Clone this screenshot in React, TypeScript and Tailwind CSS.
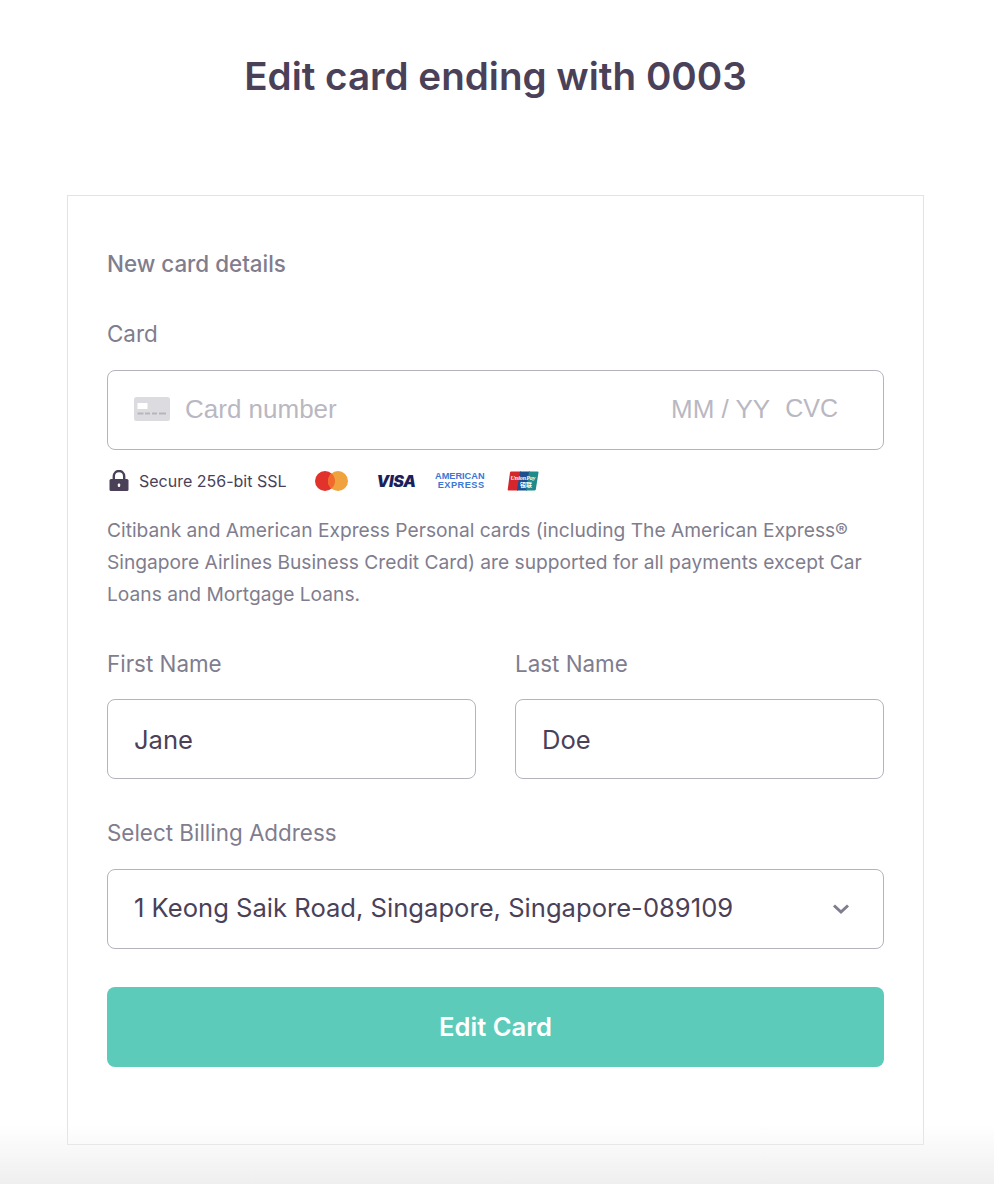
import React from "react";

function Field({ label, value }: { label: string; value: string }) {
  return (
    <div className="flex flex-col">
      <label className="text-[22.4px] leading-[28px] text-[#7f7d8e] mb-[21px]">{label}</label>
      <div className="h-[80px] rounded-[8px] border border-[#b5b4be] flex items-center pt-[2px] px-[26px] text-[25.6px] text-[#4a4159]">
        {value}
      </div>
    </div>
  );
}

export default function App() {
  return (
    <div className="relative h-[1184px] w-full overflow-hidden bg-white font-['Inter',sans-serif]">
      <h1 className="pt-[50px] pr-[3px] text-center text-[38.6px] leading-[52px] font-semibold text-[#4a4159]">
        Edit card ending with 0003
      </h1>
      <div className="ml-[67px] mr-[70px] mt-[93px] h-[950px] border border-[#e3e3e3] px-[39px] pt-[54px]">
        <div className="text-[22.4px] leading-[28px] font-medium text-[#7f7d8e]">New card details</div>
        <div className="mt-[42px] text-[22.4px] leading-[28px] text-[#7f7d8e]">Card</div>
        <div className="mt-[22px] h-[80px] rounded-[8px] border border-[#b5b4be] flex items-center pb-[2px] pl-[26px] pr-[45px] font-['Liberation_Sans',sans-serif] text-[26px] text-[#b9b8c2]">
          <svg width="36" height="24" viewBox="0 0 36 24" className="mr-[15px]">
            <rect width="36" height="24" rx="2.5" fill="#dcdce0" />
            <rect x="3.5" y="6" width="10" height="6" fill="#ffffff" />
            <rect x="3.5" y="15.5" width="6" height="2" fill="#b5b5bc" />
            <rect x="11" y="15.5" width="5" height="2" fill="#b5b5bc" />
            <rect x="18" y="15.5" width="5" height="2" fill="#b5b5bc" />
            <rect x="25" y="15.5" width="7" height="2" fill="#b5b5bc" />
          </svg>
          <span>Card number</span>
          <span className="ml-auto">MM / YY</span>
          <span className="ml-[15px] text-[25px]">CVC</span>
        </div>
        <div className="mt-[18px] h-[25px] flex items-center">
          <svg width="20" height="21" viewBox="0 0 20 21" className="ml-[2px]">
            <path d="M4.8 10V6.2a5.2 5.2 0 0 1 10.4 0V10" fill="none" stroke="#4a4159" strokeWidth="2.4" />
            <rect x="0.5" y="9" width="19" height="12" rx="1.5" fill="#4a4159" />
            <rect x="8.8" y="13.5" width="2.4" height="3.4" rx="1" fill="#ffffff" />
          </svg>
          <span className="ml-[10px] text-[16px] text-[#4a4159]">Secure 256-bit SSL</span>
          <svg width="33" height="20" viewBox="0 0 33 20" className="ml-[28px]">
            <circle cx="10" cy="10" r="10" fill="#e1322c" />
            <circle cx="23" cy="10" r="10" fill="#efa23e" />
            <path d="M16.5 2.4a10 10 0 0 1 0 15.2a10 10 0 0 1 0-15.2z" fill="#f2692c" />
          </svg>
          <span className="ml-[29px] w-[39px] text-[16px] leading-[20px] font-black italic tracking-[-0.3px] text-[#1a1f5e]">VISA</span>
          <span className="ml-[19px] w-[50px] text-right text-[9.2px] leading-[9px] font-bold text-[#3a76d6] font-['Liberation_Sans',sans-serif]">
            AMERICAN
            <br />
            <span className="tracking-[0.5px]">EXPRESS</span>
          </span>
          <svg width="32" height="20" viewBox="0 0 32 20" className="ml-[24px] -translate-x-[2px]">
            <path d="M4 0.5H14L11 19.5H1.5Q0.5 19.5 0.7 18.5L3 1.5Q3.2 0.5 4 0.5Z" fill="#d5262e" />
            <path d="M13 0.5H23L20 19.5H10Z" fill="#1c4f8e" />
            <path d="M22 0.5H30.5Q31.8 0.5 31.5 1.5L28.8 18.5Q28.6 19.5 27.5 19.5H19Z" fill="#1f8a8a" />
            <text x="16" y="9" textAnchor="middle" fontSize="6" fontStyle="italic" fontWeight="700" fill="#ffffff" fontFamily="'Liberation Serif', serif">UnionPay</text>
            <text x="19" y="16" textAnchor="middle" fontSize="6" fontWeight="700" fill="#ffffff" fontFamily="'Noto Sans CJK SC', sans-serif">银联</text>
          </svg>
        </div>
        <p className="mt-[21px] text-[19.2px] leading-[32px] text-[#7f7d8e]">
          Citibank and American Express Personal cards (including The American Express®
          <br />
          Singapore Airlines Business Credit Card) are supported for all payments except Car
          <br />
          Loans and Mortgage Loans.
        </p>
        <div className="mt-[40px] grid grid-cols-2 gap-x-[39px]">
          <Field label="First Name" value="Jane" />
          <Field label="Last Name" value="Doe" />
        </div>
        <div className="mt-[40px] flex flex-col">
          <label className="text-[22.4px] leading-[28px] text-[#7f7d8e] mb-[22px]">Select Billing Address</label>
          <div className="h-[80px] rounded-[8px] border border-[#b5b4be] flex items-center justify-between pb-[2px] pl-[26px] pr-[33px] text-[25.6px] text-[#4a4159]">
            <span>1 Keong Saik Road, Singapore, Singapore-089109</span>
            <svg width="18" height="12" viewBox="0 0 18 12" className="translate-y-[1px]">
              <path d="M2 2.5L9 9L16 2.5" fill="none" stroke="#7f7d8e" strokeWidth="3" />
            </svg>
          </div>
        </div>
        <button className="mt-[38px] h-[80px] w-full rounded-[8px] bg-[#5ccbb9] text-[25.6px] font-semibold text-white">
          Edit Card
        </button>
      </div>
      <div className="pointer-events-none absolute inset-x-0 bottom-0 h-[60px] bg-gradient-to-b from-transparent to-[#efefef]" />
    </div>
  );
}
